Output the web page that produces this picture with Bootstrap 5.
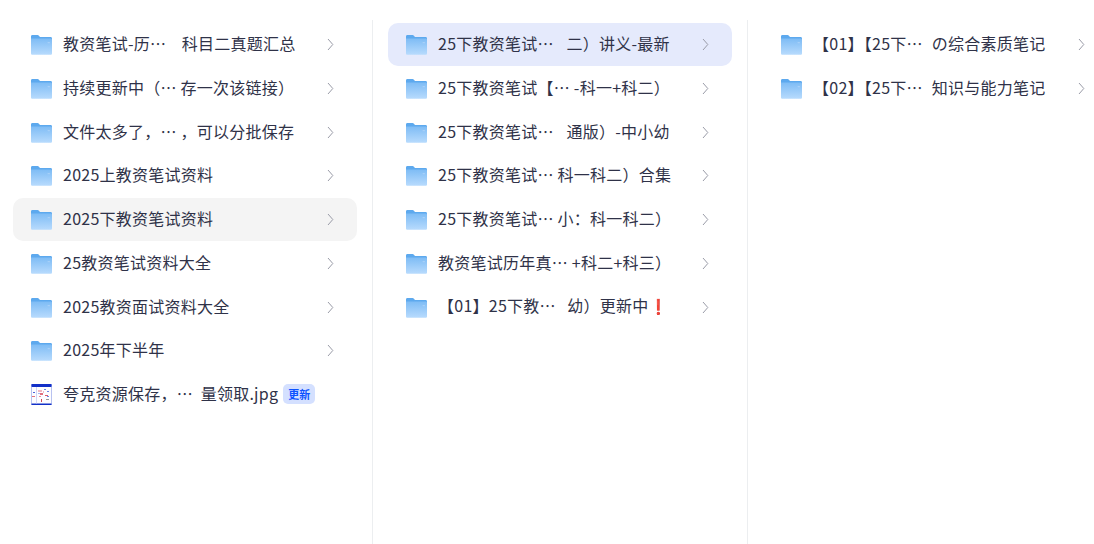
<!DOCTYPE html>
<html lang="zh-CN">
<head>
<meta charset="utf-8">
<title>文件列表</title>
<link href="https://cdn.jsdelivr.net/npm/bootstrap@5.3.0/dist/css/bootstrap.min.css" rel="stylesheet">
<style>
html,body{height:100%;overflow:hidden;background:#fff}
body{font-family:"Noto Sans CJK SC","Noto Sans",sans-serif;font-size:16px;letter-spacing:.25px;color:#2f3248}
.pane-wrap{width:1125px;height:544px}
.pane{width:375px;height:524px;margin-top:20px;padding:3px 15px 0;flex:none;border-right:1px solid #eceef0}
.pane-first{width:373px;padding-left:13px}
.pane-last{border-right:0}
.entry{height:43px;margin-bottom:.75px;padding:0 23px 0 18px;border-radius:10px;white-space:pre;line-height:22px}
.entry>span{padding-bottom:3px}
.entry-hover{background:#f4f4f4}
.entry-active{background:#e5eafc}
.entry-icon{width:21px;height:21px;flex:none;margin-right:11px;display:block}
.chev{width:7px;height:13px;flex:none;margin-left:auto;display:block}
.entry>.tag-new{background:#d4e0ff;color:#0d53ff;font-size:11px;letter-spacing:0;font-weight:700;line-height:20px;height:20px;padding:0 5px;border-radius:5px;margin:0 0 2px 5px}
.bang{color:#f0393c;font-family:"DejaVu Sans",sans-serif;font-size:15px}
</style>
</head>
<body>
<svg width="0" height="0" class="position-absolute">
<defs>
<linearGradient id="fg" x1="0" y1="0" x2="0" y2="1"><stop offset="0" stop-color="#7ebcf5"/><stop offset="1" stop-color="#b8dbfd"/></linearGradient>
<symbol id="folder" viewBox="0 0 21 21">
<path d="M0 2.400C0 1.600.6 1 1.400 1h5.200c.5 0 .8.2 1.100.5L9 3h10.600c.8 0 1.400.6 1.400 1.400V8H0z" fill="#5da9ee"/>
<path d="M0 4.500h19.800c.7 0 1.200.5 1.200 1.200v13.700c0 .8-.6 1.400-1.400 1.400H1.400C.6 20.800 0 20.200 0 19.400z" fill="url(#fg)"/>
<rect x="16.500" y="8" width="2.500" height="1.200" rx=".5" fill="#a6d0f8"/>
</symbol>
<symbol id="chevron" viewBox="0 0 7 13"><path d="M1 1l4.800 5.500L1 12" fill="none" stroke="#9a9ca8" stroke-width="1"/></symbol>
</defs>
</svg>
<main class="pane-wrap d-flex">
<section class="pane pane-first">
<div class="entry d-flex align-items-center"><svg class="entry-icon"><use href="#folder"/></svg><span>教资笔试-历⋯    科目二真题汇总</span><svg class="chev"><use href="#chevron"/></svg></div>
<div class="entry d-flex align-items-center"><svg class="entry-icon"><use href="#folder"/></svg><span>持续更新中（⋯ 存一次该链接）</span><svg class="chev"><use href="#chevron"/></svg></div>
<div class="entry d-flex align-items-center"><svg class="entry-icon"><use href="#folder"/></svg><span>文件太多了，⋯ ，可以分批保存</span><svg class="chev"><use href="#chevron"/></svg></div>
<div class="entry d-flex align-items-center"><svg class="entry-icon"><use href="#folder"/></svg><span>2025上教资笔试资料</span><svg class="chev"><use href="#chevron"/></svg></div>
<div class="entry entry-hover d-flex align-items-center"><svg class="entry-icon"><use href="#folder"/></svg><span>2025下教资笔试资料</span><svg class="chev"><use href="#chevron"/></svg></div>
<div class="entry d-flex align-items-center"><svg class="entry-icon"><use href="#folder"/></svg><span>25教资笔试资料大全</span><svg class="chev"><use href="#chevron"/></svg></div>
<div class="entry d-flex align-items-center"><svg class="entry-icon"><use href="#folder"/></svg><span>2025教资面试资料大全</span><svg class="chev"><use href="#chevron"/></svg></div>
<div class="entry d-flex align-items-center"><svg class="entry-icon"><use href="#folder"/></svg><span>2025年下半年</span><svg class="chev"><use href="#chevron"/></svg></div>
<div class="entry d-flex align-items-center">
<svg class="entry-icon" viewBox="0 0 21 21"><rect width="21" height="21" rx="2" fill="#fdfdff"/><rect width="21" height="3" rx="1" fill="#1230c8"/><rect y="19.500" width="21" height="1.500" rx=".7" fill="#1230c8"/><rect x="0" width=".6" height="21" fill="#8a9be6"/><rect x="20.400" width=".6" height="21" fill="#8a9be6"/><rect x="5" y="3" width=".6" height="17" fill="#b4bff0"/><rect x="7" y="6" width="4" height="2" fill="#f0b8c2"/><rect x="9" y="9" width="3" height="2" fill="#e0707e"/><rect x="7" y="9" width="2" height="1" fill="#a8b6ee"/><rect x="13" y="5" width="2" height="1" fill="#6a84e4"/><rect x="16" y="7" width="2" height="1" fill="#6a84e4"/><rect x="1" y="12" width="3" height="1" fill="#e0707e"/><rect x="10" y="15" width="1" height="3" fill="#c84a58"/><rect x="15" y="15" width="3" height="1" fill="#999"/><rect x="14" y="11" width="3" height="1" fill="#d85a68"/><rect x="2" y="8" width="2" height="1" fill="#4a62d8"/><rect x="16" y="12" width="2" height="1" fill="#6a84e4"/><rect x="8" y="12" width="2" height="1" fill="#e8909e"/><rect x="12" y="7" width="1" height="2" fill="#f0b8c2"/></svg>
<span>夸克资源保存，⋯  量领取.jpg</span><span class="tag-new">更新</span></div>
</section>
<section class="pane">
<div class="entry entry-active d-flex align-items-center"><svg class="entry-icon"><use href="#folder"/></svg><span>25下教资笔试⋯   &#8202;二）讲义-最新</span><svg class="chev"><use href="#chevron"/></svg></div>
<div class="entry d-flex align-items-center"><svg class="entry-icon"><use href="#folder"/></svg><span>25下教资笔试【⋯ -科一+科二）</span><svg class="chev"><use href="#chevron"/></svg></div>
<div class="entry d-flex align-items-center"><svg class="entry-icon"><use href="#folder"/></svg><span>25下教资笔试⋯   &#8202;通版）-中小幼</span><svg class="chev"><use href="#chevron"/></svg></div>
<div class="entry d-flex align-items-center"><svg class="entry-icon"><use href="#folder"/></svg><span>25下教资笔试⋯ 科一科二）合集</span><svg class="chev"><use href="#chevron"/></svg></div>
<div class="entry d-flex align-items-center"><svg class="entry-icon"><use href="#folder"/></svg><span>25下教资笔试⋯ 小：科一科二）</span><svg class="chev"><use href="#chevron"/></svg></div>
<div class="entry d-flex align-items-center"><svg class="entry-icon"><use href="#folder"/></svg><span>教资笔试历年真⋯ +科二+科三）</span><svg class="chev"><use href="#chevron"/></svg></div>
<div class="entry d-flex align-items-center"><svg class="entry-icon"><use href="#folder"/></svg><span>【01】25下教⋯   幼）更新中<span class="bang">❗</span></span><svg class="chev"><use href="#chevron"/></svg></div>
</section>
<section class="pane pane-last">
<div class="entry d-flex align-items-center"><svg class="entry-icon"><use href="#folder"/></svg><span>【01】【25下⋯  &#8202;の综合素质笔记</span><svg class="chev"><use href="#chevron"/></svg></div>
<div class="entry d-flex align-items-center"><svg class="entry-icon"><use href="#folder"/></svg><span>【02】【25下⋯  &#8202;知识与能力笔记</span><svg class="chev"><use href="#chevron"/></svg></div>
</section>
</main>
<script src="https://cdn.jsdelivr.net/npm/bootstrap@5.3.0/dist/js/bootstrap.bundle.min.js"></script>
</body>
</html>
